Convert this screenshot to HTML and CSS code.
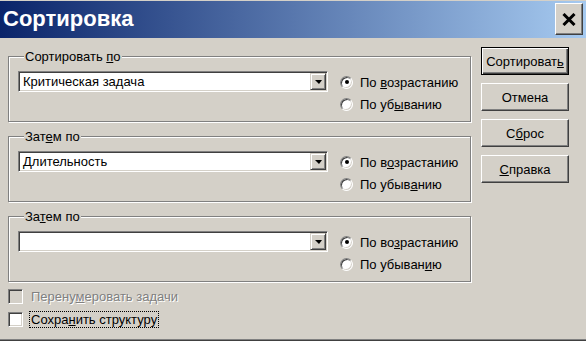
FILE: index.html
```html
<!DOCTYPE html>
<html lang="ru">
<head>
    <meta charset="UTF-8">
    <title>Сортировка</title>
    <link rel="stylesheet" href="styles.css">
</head>
<body>
    <div class="dialog">
        <div class="titlebar">
            <span class="title">Сортировка</span>
            <button class="close" aria-label="Закрыть">
                <svg width="14" height="13" viewBox="0 0 14 13">
                    <path d="M1.5 1 L12.5 12 M12.5 1 L1.5 12" stroke="#000" stroke-width="3"/>
                </svg>
            </button>
        </div>

        <div class="content">
            <div class="groups">
                <fieldset class="group">
                    <legend>Сортировать <u>п</u>о</legend>
                    <div class="combo">
                        <span class="combo-text">Критическая задача</span>
                        <span class="combo-btn"><span class="arrow"></span></span>
                    </div>
                    <div class="radios">
                        <div class="radio-row"><span class="radio checked"></span><span>По <u>в</u>озрастанию</span></div>
                        <div class="radio-row"><span class="radio"></span><span>По уб<u>ы</u>ванию</span></div>
                    </div>
                </fieldset>

                <fieldset class="group">
                    <legend>Зат<u>е</u>м по</legend>
                    <div class="combo">
                        <span class="combo-text">Длительность</span>
                        <span class="combo-btn"><span class="arrow"></span></span>
                    </div>
                    <div class="radios">
                        <div class="radio-row"><span class="radio checked"></span><span>По в<u>о</u>зрастанию</span></div>
                        <div class="radio-row"><span class="radio"></span><span>По убыв<u>а</u>нию</span></div>
                    </div>
                </fieldset>

                <fieldset class="group">
                    <legend>За<u>т</u>ем по</legend>
                    <div class="combo">
                        <span class="combo-text"></span>
                        <span class="combo-btn"><span class="arrow"></span></span>
                    </div>
                    <div class="radios">
                        <div class="radio-row"><span class="radio checked"></span><span>По во<u>з</u>растанию</span></div>
                        <div class="radio-row"><span class="radio"></span><span>По убыван<u>и</u>ю</span></div>
                    </div>
                </fieldset>

                <div class="checks">
                    <div class="check-row disabled"><span class="checkbox"></span><span class="check-label">Перену<u>м</u>еровать задачи</span></div>
                    <div class="check-row"><span class="checkbox"></span><span class="check-label focused">Сохра<u>н</u>ить структуру</span></div>
                </div>
            </div>

            <div class="actions">
                <button class="button default">Сортироват<u>ь</u></button>
                <button class="button">Отмена</button>
                <button class="button">С<u>б</u>рос</button>
                <button class="button"><u>С</u>правка</button>
            </div>
        </div>
    </div>
</body>
</html>
```

FILE: styles.css
```css
body {
    margin: 0;
    font-family: 'Liberation Sans', Arial, sans-serif;
    font-size: 13px;
    color: #000;
    background: #d4d0c8;
}
.dialog {
    width: 586px;
    height: 341px;
    box-sizing: border-box;
    background: #d4d0c8;
    border-bottom: 1px solid #404040;
    box-shadow: inset 0 -1px 0 #808080;
}
.titlebar {
    height: 38px;
    box-sizing: border-box;
    border-top: 1px solid #d4d0c8;
    background: linear-gradient(to right, #0a246a, #a6caf0);
    display: flex;
    justify-content: space-between;
    align-items: flex-start;
    padding: 0 3px 0 3px;
}
.title {
    color: #fff;
    font-weight: bold;
    font-size: 22px;
    line-height: 36px;
}
.close {
    margin-top: 2px;
    width: 28px;
    height: 32px;
    padding: 0;
    background: #d4d0c8;
    border: 1px solid;
    border-color: #fff #404040 #404040 #fff;
    box-shadow: inset -1px -1px 0 #808080;
    display: flex;
    align-items: center;
    justify-content: center;
}
.content {
    display: flex;
    padding: 9px 0 0 8px;
    gap: 10px;
}
.groups {
    width: 463px;
}
.group {
    margin: 2px 0 7px;
    padding: 7px 9px 6px;
    border: 1px solid #808080;
    box-shadow: inset 1px 1px 0 #fff, 1px 1px 0 #fff;
    display: flex;
    align-items: flex-start;
    gap: 12px;
}
.group + .group {
    margin-top: 0;
}
.group:last-of-type {
    margin-bottom: 3px;
}
.group legend {
    padding: 0 1px;
    margin-left: 6px;
    line-height: 15px;
    background: #d4d0c8;
}
.combo {
    flex: none;
    width: 310px;
    height: 21px;
    box-sizing: border-box;
    border: 1px solid;
    border-color: #808080 #fff #fff #808080;
    box-shadow: inset 1px 1px 0 #404040, inset -1px -1px 0 #d4d0c8;
    background: #fff;
    display: flex;
    padding: 1px;
}
.combo-text {
    flex: 1;
    padding-left: 3px;
    line-height: 17px;
}
.combo-btn {
    width: 16px;
    height: 17px;
    box-sizing: border-box;
    background: #d4d0c8;
    border: 1px solid;
    border-color: #d4d0c8 #404040 #404040 #d4d0c8;
    box-shadow: inset 1px 1px 0 #fff, inset -1px -1px 0 #808080;
    display: flex;
    align-items: center;
    justify-content: center;
}
.arrow {
    width: 0;
    height: 0;
    border-left: 4px solid transparent;
    border-right: 3px solid transparent;
    border-top: 4px solid #000;
    margin-top: 1px;
}
.radios {
    display: flex;
    flex-direction: column;
    white-space: nowrap;
}
.radio-row {
    height: 22px;
    display: flex;
    align-items: center;
    gap: 7px;
}
.radio {
    width: 13px;
    height: 13px;
    box-sizing: border-box;
    border-radius: 50%;
    border: 1px solid;
    border-color: #808080 #fff #fff #808080;
    box-shadow: inset 1px 1px 0 #404040, inset -1px -1px 0 #d4d0c8;
    background: #fff;
    display: flex;
    align-items: center;
    justify-content: center;
}
.radio.checked::after {
    content: "";
    width: 4px;
    height: 4px;
    border-radius: 50%;
    background: #000;
}
.checks {
    display: flex;
    flex-direction: column;
}
.check-row {
    height: 23px;
    display: flex;
    align-items: center;
    gap: 6px;
}
.checkbox {
    width: 15px;
    height: 15px;
    box-sizing: border-box;
    border: 1px solid;
    border-color: #808080 #fff #fff #808080;
    box-shadow: inset 1px 1px 0 #404040, inset -1px -1px 0 #d4d0c8;
    background: #fff;
}
.check-row.disabled .checkbox {
    background: #d4d0c8;
}
.check-row.disabled .check-label {
    color: #808080;
    text-shadow: 1px 1px 0 #fff;
}
.check-label {
    padding: 0 1px;
    line-height: 15px;
    border: 1px dotted transparent;
}
.check-label.focused {
    border-color: #000;
}
.actions {
    display: flex;
    flex-direction: column;
    gap: 8px;
}
.button {
    width: 88px;
    height: 28px;
    padding: 0;
    font: inherit;
    color: #000;
    background: #d4d0c8;
    border: 1px solid;
    border-color: #fff #404040 #404040 #fff;
    box-shadow: inset -1px -1px 0 #808080;
}
.button.default {
    border-color: #000;
    box-shadow: inset 1px 1px 0 #fff, inset -1px -1px 0 #404040, inset -2px -2px 0 #808080;
}
```
